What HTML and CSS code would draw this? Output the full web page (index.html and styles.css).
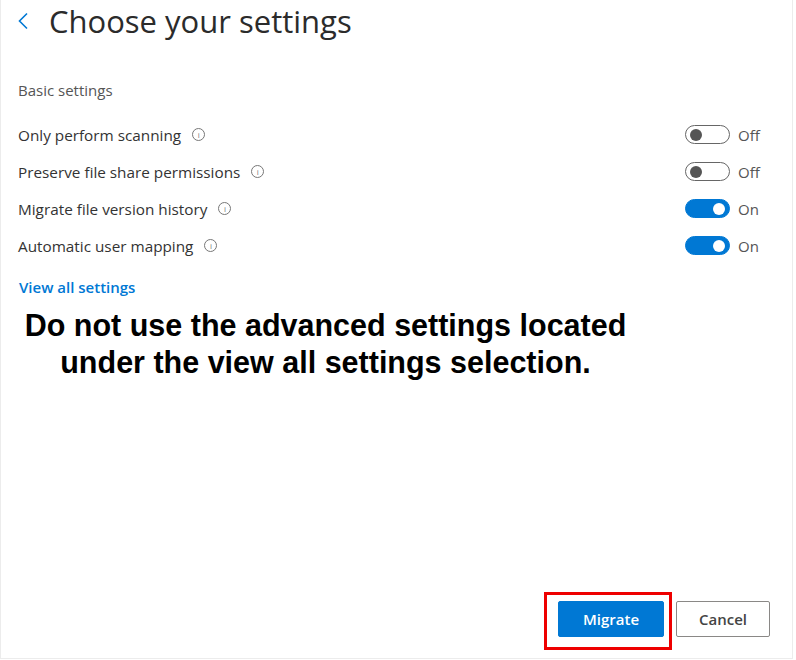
FILE: index.html
```html
<!DOCTYPE html>
<html lang="en">
<head>
    <meta charset="UTF-8">
    <meta name="viewport" content="width=device-width, initial-scale=1.0">
    <title>Choose your settings</title>
    <link rel="stylesheet" href="styles.css">
</head>
<body>
    <div class="panel">
        <div class="header">
            <svg class="back" width="12" height="18" viewBox="0 0 12 18">
                <path d="M10 1.5 L2.5 9 L10 16.5" fill="none" stroke="#0078d4" stroke-width="1.6"/>
            </svg>
            <h1>Choose your settings</h1>
        </div>

        <div class="section-title">Basic settings</div>

        <div class="settings">
            <div class="row">
                <span class="label">Only perform scanning <span class="info">i</span></span>
                <span class="toggle"><span class="knob"></span></span>
                <span class="state">Off</span>
            </div>
            <div class="row">
                <span class="label">Preserve file share permissions <span class="info">i</span></span>
                <span class="toggle"><span class="knob"></span></span>
                <span class="state">Off</span>
            </div>
            <div class="row">
                <span class="label">Migrate file version history <span class="info">i</span></span>
                <span class="toggle on"><span class="knob"></span></span>
                <span class="state">On</span>
            </div>
            <div class="row">
                <span class="label">Automatic user mapping <span class="info">i</span></span>
                <span class="toggle on"><span class="knob"></span></span>
                <span class="state">On</span>
            </div>
        </div>

        <a class="view-all" href="#">View all settings</a>

        <p class="note">Do not use the advanced settings located<br>under the view all settings selection.</p>

        <div class="footer">
            <div class="highlight">
                <button class="btn primary">Migrate</button>
            </div>
            <button class="btn cancel">Cancel</button>
        </div>
    </div>
</body>
</html>
```

FILE: styles.css
```css
body { margin: 0; background: #fff; font-family: "Open Sans", "Noto Sans", sans-serif; color: #2b2b2b; }
.panel { width: 791px; height: 658px; border: 1px solid #ececec; border-top: none; display: flex; flex-direction: column; }

.header { display: flex; align-items: center; height: 42px; padding-left: 16px; }
.back { margin-right: 20px; }
h1 { margin: 0; font-size: 31px; font-weight: 400; color: #2b2b2b; line-height: 40px; }

.section-title { margin: 38px 0 0 17px; font-size: 15px; color: #555; }

.settings { margin-top: 16px; padding: 0 24px 0 17px; }
.row { display: flex; align-items: center; height: 37px; }
.label { flex: 1; font-size: 15.3px; color: #333; display: flex; align-items: center; }
.info { display: inline-flex; align-items: center; justify-content: center; width: 11px; height: 11px; border: 1px solid #777; border-radius: 50%; font-size: 8px; line-height: 1; color: #777; margin-left: 11px; }

.toggle { width: 39px; height: 17px; border: 1.5px solid #666; border-radius: 11px; display: flex; align-items: center; padding: 0 2px; }
.toggle .knob { width: 12px; height: 12px; border-radius: 50%; background: #555; margin-left: 2px; }
.toggle.on { background: #0078d4; border-color: #0078d4; justify-content: flex-end; }
.toggle.on .knob { background: #fff; margin-left: 0; margin-right: 2px; }
.state { width: 30px; margin-left: 8px; font-size: 15px; color: #555; }

.view-all { margin: 13px 0 0 18px; font-size: 15px; font-weight: 600; color: #0078d4; text-decoration: none; align-self: flex-start; }

.note { margin: 10px 0 0; width: 649px; text-align: center; font-family: "Liberation Sans", Arial, sans-serif; font-weight: 700; font-size: 30.5px; line-height: 37px; color: #000; }

.footer { margin-top: auto; display: flex; align-items: center; justify-content: flex-end; gap: 4px; padding: 0 22px 8px 0; }
.highlight { border: 3px solid #e00; padding: 6px 5px 10px 11px; }
.btn { font-family: "Open Sans", "Noto Sans", sans-serif; font-size: 15px; font-weight: 600; height: 36px; padding: 0 20px; border: 1px solid #8a8886; border-radius: 2px; background: #fff; color: #444; width: 94px; }
.btn.primary { width: 106px; background: #0078d4; border-color: #0078d4; color: #fff; }
.btn.cancel { margin-bottom: 4px; }
```
